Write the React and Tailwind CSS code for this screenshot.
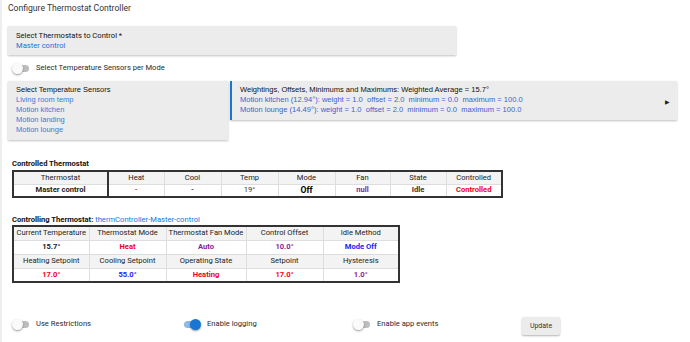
function Toggle({ on }) {
  return (
    <span className="relative inline-block w-[18px] h-[12px] shrink-0">
      <span className={"absolute left-[1px] right-[1px] top-[3px] h-[7px] rounded-full " + (on ? "bg-[#8fb9e6]" : "bg-[#bdbdbd]")} />
      <span className={"absolute top-[1px] w-[11px] h-[11px] rounded-full shadow-[0_1px_2px_rgba(0,0,0,0.4)] " + (on ? "left-[7px] bg-[#1976d2]" : "left-0 bg-[#fafafa]")} />
    </span>
  )
}

const hdr = "border border-[#ddd] bg-[#f3f3f3] font-normal text-[#222] px-1 h-[13px] whitespace-nowrap"
const cell = "border border-[#ddd] px-1 h-[13px] font-bold whitespace-nowrap"
const hdr2 = "border border-[#ddd] bg-[#f3f3f3] font-normal text-[#222] px-0 h-[14px] whitespace-nowrap"
const cell2 = "border border-[#ddd] px-0 h-[14px] font-bold whitespace-nowrap"

function App() {
  return (
    <div className="w-[690px] h-[342px] bg-white overflow-hidden border-l-2 border-[#eeeeee] text-[#2a2a2a] font-['Roboto',sans-serif] text-[7.6px] leading-[10px]">
      <div className="pl-[6px] pt-[2px]">
        <div className="text-[8.6px] leading-[12px] text-[#333]">Configure Thermostat Controller</div>

        <div className="mt-[12px] w-[448px] bg-[#ececec] shadow-[0_1px_2px_rgba(0,0,0,0.25)] px-[8px] pt-[5px] pb-[4px]">
          <div className="text-[#111]">Select Thermostats to Control *</div>
          <div className="text-[#1a73d9]">Master control</div>
        </div>

        <div className="flex items-center gap-[6px] mt-[7px] pl-[4px]">
          <Toggle />
          <span>Select Temperature Sensors per Mode</span>
        </div>

        <div className="flex items-start gap-[2px] mt-[7px]">
          <div className="w-[220px] bg-[#ececec] shadow-[0_1px_2px_rgba(0,0,0,0.25)] px-[8px] pt-[4px] pb-[5px] font-['Liberation_Sans',sans-serif] text-[7.5px] leading-[10px]">
            <div className="text-[#111]">Select Temperature Sensors</div>
            <div className="text-[#3c78d8]">Living room temp</div>
            <div className="text-[#3c78d8]">Motion kitchen</div>
            <div className="text-[#3c78d8]">Motion landing</div>
            <div className="text-[#3c78d8]">Motion lounge</div>
          </div>
          <div className="relative w-[447px] bg-[#ececec] border-l-2 border-[#1976d2] shadow-[0_1px_2px_rgba(0,0,0,0.25)] pl-[8px] pt-[4px] pb-[5px] font-['Liberation_Sans',sans-serif] text-[7.55px] leading-[10px]">
            <div className="text-[#111]">Weightings, Offsets, Minimums and Maximums: Weighted Average = 15.7°</div>
            <div className="text-[#3c5fd0] whitespace-pre">Motion kitchen (12.94°): weight = 1.0  offset = 2.0  minimum = 0.0  maximum = 100.0</div>
            <div className="text-[#3c5fd0] whitespace-pre">Motion lounge (14.49°): weight = 1.0  offset = 2.0  minimum = 0.0  maximum = 100.0</div>
            <span className="absolute right-[7px] top-[16px] text-[6px] text-[#222]">▶</span>
          </div>
        </div>

        <div className="mt-[19px] pl-[4px]">
          <div className="font-bold text-[#111] mb-[1px]">Controlled Thermostat</div>
          <table className="border-2 border-[#333] border-collapse text-center table-fixed">
            <thead>
              <tr>
                <th className={hdr + " w-[95px] border-r-2 border-r-[#333]"}>Thermostat</th>
                <th className={hdr + " w-[56px]"}>Heat</th>
                <th className={hdr + " w-[57px]"}>Cool</th>
                <th className={hdr + " w-[57px]"}>Temp</th>
                <th className={hdr + " w-[57px]"}>Mode</th>
                <th className={hdr + " w-[55px]"}>Fan</th>
                <th className={hdr + " w-[56px]"}>State</th>
                <th className={hdr + " w-[56px]"}>Controlled</th>
              </tr>
            </thead>
            <tbody>
              <tr>
                <td className={cell + " border-r-2 border-r-[#333] text-[#222]"}>Master control</td>
                <td className={cell + " text-[#e53935]"}>-</td>
                <td className={cell + " text-[#3949ab]"}>-</td>
                <td className="border border-[#ddd] px-1 h-[13px] text-[#333]">19°</td>
                <td className={cell + " text-[#000] text-[8.6px]"}>Off</td>
                <td className={cell + " text-[#8e1a9a]"}>null</td>
                <td className={cell + " text-[#333]"}>Idle</td>
                <td className={cell + " text-[#f0001a]"}>Controlled</td>
              </tr>
            </tbody>
          </table>
        </div>

        <div className="mt-[17px] pl-[4px]">
          <div>
            <span className="font-bold text-[#111]">Controlling Thermostat: </span>
            <span className="text-[#1a73d9]">thermController-Master-control</span>
          </div>
          <table className="border-2 border-[#333] border-collapse text-center table-fixed">
            <tbody>
              <tr>
                <td className={hdr2 + " w-[76px]"}>Current Temperature</td>
                <td className={hdr2 + " w-[77px]"}>Thermostat Mode</td>
                <td className={hdr2 + " w-[80px]"}>Thermostat Fan Mode</td>
                <td className={hdr2 + " w-[77px]"}>Control Offset</td>
                <td className={hdr2 + " w-[76px]"}>Idle Method</td>
              </tr>
              <tr>
                <td className={cell2 + " text-[#222]"}>15.7°</td>
                <td className={cell2 + " text-[#f0001a]"}>Heat</td>
                <td className={cell2 + " text-[#8e1a9a]"}>Auto</td>
                <td className={cell2 + " text-[#8e1a9a]"}>10.0°</td>
                <td className={cell2 + " text-[#1a1aff]"}>Mode Off</td>
              </tr>
              <tr>
                <td className={hdr2}>Heating Setpoint</td>
                <td className={hdr2}>Cooling Setpoint</td>
                <td className={hdr2}>Operating State</td>
                <td className={hdr2}>Setpoint</td>
                <td className={hdr2}>Hysteresis</td>
              </tr>
              <tr>
                <td className={cell2 + " text-[#f0001a]"}>17.0°</td>
                <td className={cell2 + " text-[#1a1aff]"}>55.0°</td>
                <td className={cell2 + " text-[#f0001a]"}>Heating</td>
                <td className={cell2 + " text-[#f0001a]"}>17.0°</td>
                <td className={cell2 + " text-[#8e1a9a]"}>1.0°</td>
              </tr>
            </tbody>
          </table>
        </div>

        <div className="flex items-center mt-[30px] pl-[4px]">
          <div className="flex items-center gap-[6px] w-[171px]">
            <Toggle />
            <span>Use Restrictions</span>
          </div>
          <div className="flex items-center gap-[6px] w-[170px]">
            <Toggle on />
            <span>Enable logging</span>
          </div>
          <div className="flex items-center gap-[6px] w-[169px]">
            <Toggle />
            <span>Enable app events</span>
          </div>
          <button className="w-[38px] h-[18px] bg-[#ececec] shadow-[0_1px_2px_rgba(0,0,0,0.3)] text-[7px] text-[#333] rounded-[2px] mt-[4px]">Update</button>
        </div>
      </div>
    </div>
  )
}

export default App
